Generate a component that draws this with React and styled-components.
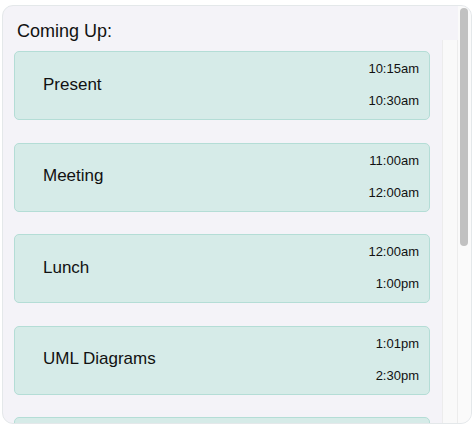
import React from "react";
import styled, { createGlobalStyle } from "styled-components";

const Global = createGlobalStyle`
  html, body {
    margin: 0;
    padding: 0;
    background: #fff;
  }
  body {
    font-family: "Liberation Sans", Arial, sans-serif;
    color: #111;
  }
`;

const Panel = styled.div`
  margin: 5px 4px 0 2px;
  height: 419px;
  box-sizing: border-box;
  background: #f4f3f8;
  border: 1px solid #e4e8ea;
  border-radius: 11px;
  overflow: hidden;
  display: flex;
`;

const Content = styled.div`
  flex: 1;
  padding: 0 12px 0 11px;
  display: flex;
  flex-direction: column;
`;

const Title = styled.h2`
  flex: none;
  margin: 13px 0 0 3px;
  height: 32px;
  font-size: 18px;
  font-weight: normal;
  line-height: 24px;
`;

const List = styled.div`
  flex: none;
  display: flex;
  flex-direction: column;
  gap: 22.5px;
`;

const Card = styled.div`
  flex: none;
  height: 69px;
  box-sizing: border-box;
  background: #d6ebe8;
  border: 1px solid #b4ddd6;
  border-radius: 5px;
  display: flex;
  align-items: center;
  justify-content: space-between;
  padding: 0 10px 0 28px;
`;

const Name = styled.span`
  font-size: 17px;
  margin-top: -2px;
`;

const Times = styled.div`
  align-self: stretch;
  display: flex;
  flex-direction: column;
  justify-content: space-between;
  align-items: flex-end;
  padding: 9px 0 11px;
  font-size: 13px;
`;

const Track = styled.div`
  flex: none;
  width: 14px;
  margin-top: 34px;
  background: #f9f9f9;
  border-left: 1px solid #ececec;
  border-right: 1px solid #ececec;
`;

const Scrollbar = styled.div`
  flex: none;
  width: 13px;
  padding: 2px 1px 0 2px;
  box-sizing: border-box;
  background: #fafafa;
`;

const Thumb = styled.div`
  width: 8px;
  height: 238px;
  border-radius: 4px;
  background: #c1c1c1;
`;

const events = [
  { name: "Present", start: "10:15am", end: "10:30am" },
  { name: "Meeting", start: "11:00am", end: "12:00am" },
  { name: "Lunch", start: "12:00am", end: "1:00pm" },
  { name: "UML Diagrams", start: "1:01pm", end: "2:30pm" },
];

export default function App() {
  return (
    <>
      <Global />
      <Panel>
        <Content>
          <Title>Coming Up:</Title>
          <List>
            {events.map((e) => (
              <Card key={e.name}>
                <Name>{e.name}</Name>
                <Times>
                  <span>{e.start}</span>
                  <span>{e.end}</span>
                </Times>
              </Card>
            ))}
            {/* next item, scrolled out of view */}
            <Card />
          </List>
        </Content>
        <Track />
        <Scrollbar>
          <Thumb />
        </Scrollbar>
      </Panel>
    </>
  );
}
